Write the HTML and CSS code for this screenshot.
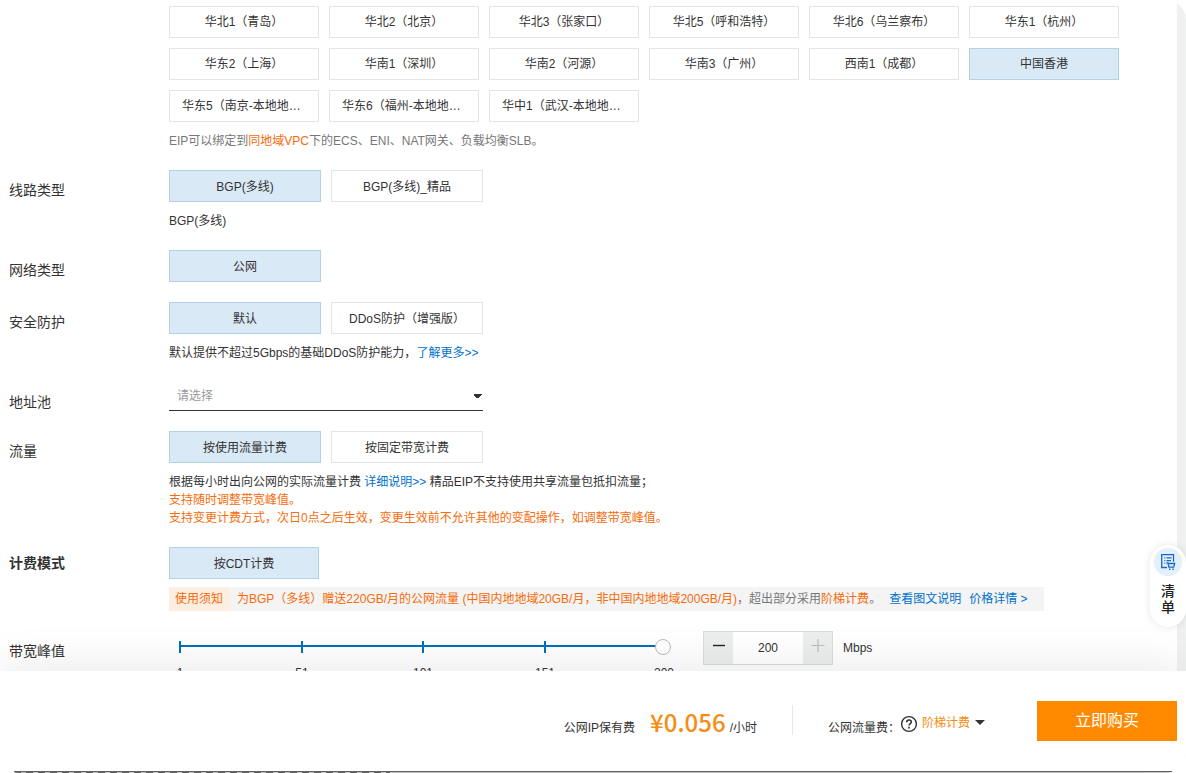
FILE: index.html
```html
<!DOCTYPE html>
<html lang="zh-CN">
<head>
<meta charset="utf-8">
<meta name="viewport" content="width=device-width, initial-scale=1">
<title>弹性公网IP</title>
<link rel="stylesheet" href="styles.css">
</head>
<body>
<div class="screen">
  <main class="form">
    <section class="row">
      <div class="row-label"></div>
      <div class="row-body">
        <div class="options">
          <button class="option option-region" type="button">华北1（青岛）</button>
          <button class="option option-region" type="button">华北2（北京）</button>
          <button class="option option-region" type="button">华北3（张家口）</button>
          <button class="option option-region" type="button">华北5（呼和浩特）</button>
          <button class="option option-region" type="button">华北6（乌兰察布）</button>
          <button class="option option-region" type="button">华东1（杭州）</button>
          <button class="option option-region" type="button">华东2（上海）</button>
          <button class="option option-region" type="button">华南1（深圳）</button>
          <button class="option option-region" type="button">华南2（河源）</button>
          <button class="option option-region" type="button">华南3（广州）</button>
          <button class="option option-region" type="button">西南1（成都）</button>
          <button class="option option-region selected" type="button">中国香港</button>
          <button class="option option-region" type="button">华东5（南京-本地地域）</button>
          <button class="option option-region" type="button">华东6（福州-本地地域）</button>
          <button class="option option-region" type="button">华中1（武汉-本地地域）</button>
        </div>
        <p class="hint muted">EIP可以绑定到<span class="warn">同地域VPC</span>下的ECS、ENI、NAT网关、负载均衡SLB。</p>
      </div>
    </section>

    <section class="row">
      <div class="row-label">线路类型</div>
      <div class="row-body">
        <div class="options">
          <button class="option selected" type="button">BGP(多线)</button>
          <button class="option" type="button">BGP(多线)_精品</button>
        </div>
        <p class="hint">BGP(多线)</p>
      </div>
    </section>

    <section class="row">
      <div class="row-label">网络类型</div>
      <div class="row-body">
        <div class="options">
          <button class="option selected" type="button">公网</button>
        </div>
      </div>
    </section>

    <section class="row">
      <div class="row-label">安全防护</div>
      <div class="row-body">
        <div class="options">
          <button class="option selected" type="button">默认</button>
          <button class="option" type="button">DDoS防护（增强版）</button>
        </div>
        <p class="hint">默认提供不超过5Gbps的基础DDoS防护能力，<a href="#">了解更多&gt;&gt;</a></p>
      </div>
    </section>

    <section class="row">
      <label class="row-label" for="pool">地址池</label>
      <div class="row-body">
        <select class="pool" id="pool"><option>请选择</option></select>
      </div>
    </section>

    <section class="row">
      <div class="row-label">流量</div>
      <div class="row-body">
        <div class="options">
          <button class="option selected" type="button">按使用流量计费</button>
          <button class="option" type="button">按固定带宽计费</button>
        </div>
        <p class="hint">根据每小时出向公网的实际流量计费 <a href="#">详细说明&gt;&gt;</a> 精品EIP不支持使用共享流量包抵扣流量；<br>
          <span class="warn">支持随时调整带宽峰值。<br>支持变更计费方式，次日0点之后生效，变更生效前不允许其他的变配操作，如调整带宽峰值。</span></p>
      </div>
    </section>

    <section class="row">
      <div class="row-label row-label-strong">计费模式</div>
      <div class="row-body">
        <div class="options">
          <button class="option option-mode selected" type="button">按CDT计费</button>
        </div>
        <div class="notice">
          <span class="notice-tag">使用须知</span>
          <span class="notice-text"><span class="warn">为BGP（多线）赠送220GB/月的公网流量 (中国内地地域20GB/月，非中国内地地域200GB/月)</span>，超出部分采用<span class="warn">阶梯计费</span>。</span>
          <a href="#">查看图文说明</a>
          <a href="#">价格详情 &gt;</a>
        </div>
      </div>
    </section>

    <section class="row">
      <label class="row-label" for="bandwidth">带宽峰值</label>
      <div class="row-body bandwidth">
        <div class="slider">
          <input class="slider-input" id="bandwidth" type="range" min="1" max="200" value="200">
          <div class="slider-scale"><span>1</span><span>51</span><span>101</span><span>151</span><span>200</span></div>
        </div>
        <div class="stepper">
          <button class="step" type="button" aria-label="减少"><svg width="14" height="14" viewBox="0 0 14 14"><path d="M1 6.5h12" stroke="#222" stroke-width="1.4"/></svg></button>
          <input class="step-value" type="text" value="200" aria-label="带宽值">
          <button class="step" type="button" aria-label="增加" disabled><svg width="14" height="14" viewBox="0 0 14 14"><path d="M.5 6.5h13M7 0v13" stroke="#bbb" stroke-width="1.2"/></svg></button>
        </div>
        <span class="unit">Mbps</span>
      </div>
    </section>
  </main>

  <footer class="checkout">
    <div class="fee">
      <span>公网IP保有费</span>
      <strong class="price">¥0.056</strong>
      <span>/小时</span>
    </div>
    <div class="divider"></div>
    <div class="traffic">
      <span class="traffic-label">公网流量费：</span>
      <svg class="help" width="18" height="18" viewBox="0 0 18 18" fill="none" stroke="#333" stroke-width="1.4"><circle cx="9" cy="9" r="7.4"/><path d="M6.7 7.3C6.7 5.8 7.7 5 9 5s2.4.8 2.4 2.1c0 1.5-2.3 1.7-2.3 3.4" stroke-width="1.6"/><path d="M9 11.8v1.6" stroke-width="1.7"/></svg>
      <button class="tier" type="button">阶梯计费<svg width="10" height="5" viewBox="0 0 10 5"><path d="M0 0h10L5 5z" fill="#333"/></svg></button>
    </div>
    <button class="buy" type="button">立即购买</button>
  </footer>
  <div class="edge"></div>

  <button class="cart" type="button">
    <span class="cart-icon"><svg width="16" height="18" viewBox="0 0 16 18" fill="none" stroke="#1769c2" stroke-width="1.3"><path d="M7 14.5H1.7V1.7h11.8v7"/><path d="M4.3 4.8h1M6.5 4.8h5M4.3 7.6h1M6.5 7.6h4.5M4.3 10.4h1"/><path d="M6.4 9.8h1.5l1 4.3h4.8l1-3.6H8.2"/><path d="M9 16.3h1.4M12.4 16.3h1.4" stroke-width="1.6"/></svg></span>
    <span class="cart-text">清单</span>
  </button>
</div>
</body>
</html>
```

FILE: styles.css
```css
* { box-sizing: border-box; }

body {
  margin: 0;
  background: #fff;
  color: #333;
  font: 12px/18px "Liberation Sans", "Noto Sans CJK SC", sans-serif;
}

button, input, select { font: inherit; color: inherit; margin: 0; }
button { cursor: pointer; }
a { color: #0070cc; text-decoration: none; }

.screen {
  position: relative;
  display: flex;
  flex-direction: column;
  height: 100vh;
  border-radius: 20px;
  overflow: hidden;
}

.form {
  flex: 1;
  min-height: 0;
  overflow: hidden;
  padding: 6px 0 0 9px;
  border-right: 9px solid #eff1f1;
}

.row { display: flex; margin-bottom: 20px; }
.row-label {
  flex: none;
  width: 160px;
  padding-top: 11px;
  font-size: 14px;
}
.row-label-strong { padding-top: 7px; font-weight: bold; }
.row-body { flex: 1; min-width: 0; }

.options { display: flex; flex-wrap: wrap; gap: 10px; }
.option {
  width: 152px;
  height: 32px;
  padding: 2px 12px 0;
  border: 1px solid #e3e4e6;
  background: #fff;
  text-align: center;
  white-space: nowrap;
  overflow: hidden;
  text-overflow: ellipsis;
}
.option-region { width: 150px; padding-top: 0; }
.option-mode { width: 150px; }
.selected { background: #d9e9f6; border-color: #b5d1e6; }

.hint { margin: 10px 0 0; }
.muted { color: #777; }
.warn { color: #f76b0a; }

.pool {
  display: block;
  width: 314px;
  height: 29px;
  padding: 0 8px;
  border: 0;
  border-bottom: 1px solid #333;
  border-radius: 0;
  appearance: none;
  color: #999;
  background:
    linear-gradient(to bottom right, #333 50%, transparent 50%) right 0 top 12px / 5px 5px no-repeat,
    linear-gradient(to bottom left, #333 50%, transparent 50%) right 5px top 12px / 5px 5px no-repeat,
    #fff;
}

.notice {
  display: flex;
  width: max-content;
  max-width: 100%;
  margin-top: 8px;
  padding-right: 16px;
  line-height: 24px;
  white-space: nowrap;
  background: #f4f4f4;
  color: #777;
}
.notice-tag { padding: 0 7px 0 6px; background: #fdeee2; color: #f76b0a; }
.notice-text { margin-left: 7px; }
.notice a { margin-left: 8px; }

.bandwidth { display: flex; align-items: flex-start; }
.slider { width: 502px; margin-right: 32px; }
.slider-input {
  display: block;
  width: 100%;
  height: 32px;
  padding: 0 0 0 3px;
  appearance: none;
  background:
    linear-gradient(#0070b8, #0070b8) 10px 14px / 484px 2px no-repeat,
    linear-gradient(#0070b8, #0070b8) 10px 10px / 2px 12px no-repeat,
    linear-gradient(#0070b8, #0070b8) 132px 10px / 2px 12px no-repeat,
    linear-gradient(#0070b8, #0070b8) 253px 10px / 2px 12px no-repeat,
    linear-gradient(#0070b8, #0070b8) 375px 10px / 2px 12px no-repeat;
}
.slider-input::-webkit-slider-thumb {
  appearance: none;
  width: 16px;
  height: 16px;
  border: 1px solid #bbb;
  border-radius: 50%;
  background: #fff;
}
.slider-scale {
  display: grid;
  grid-template-columns: 122px 121px 122px 119px 30px;
  margin: 1px 0 0 -4px;
}
.slider-scale span { width: 30px; text-align: center; }

.stepper {
  display: flex;
  width: 130px;
  height: 34px;
  border: 1px solid #d9dbdc;
}
.step {
  display: flex;
  justify-content: center;
  align-items: center;
  width: 29px;
  padding: 0 0 4px;
  border: 0;
  background: #eceeee;
}
.step-value {
  flex: 1;
  min-width: 0;
  padding: 0;
  border: 0;
  background: #fff;
  text-align: center;
}
.unit { margin-left: 10px; line-height: 34px; }

.checkout {
  position: relative;
  flex: none;
  display: flex;
  justify-content: flex-end;
  align-items: center;
  height: 100px;
  padding-right: 9px;
  background: #fff;
  box-shadow: 0 0 50px rgba(0, 0, 0, 0.1);
}
.fee {
  display: flex;
  align-items: baseline;
  padding: 8px 35px 0 0;
  line-height: 30px;
}
.divider { width: 1px; height: 30px; margin-bottom: 2px; background: #e8e8e8; }
.price {
  margin: 0 4px 0 15px;
  color: #f68c13;
  font-family: "Noto Sans CJK SC", sans-serif;
  font-size: 24px;
  font-weight: 500;
}
.traffic { display: flex; align-items: center; margin: 6px 52px 0 35px; }
.traffic-label { padding-top: 7px; }
.tier {
  display: flex;
  align-items: center;
  gap: 5px;
  padding: 0 0 3px 4px;
  border: 0;
  background: none;
  color: #f68c13;
}
.buy {
  width: 140px;
  height: 40px;
  padding: 0;
  border: 0;
  background: #ff8a00;
  color: #fff;
  font-size: 16px;
}

.edge {
  flex: none;
  height: 2px;
  margin: 0 14px;
  border-top: 1px solid #666;
  background: repeating-linear-gradient(90deg, #666 0 7px, #ccc 7px 12px) 0 0 / 376px 1px no-repeat #ccc;
}

.cart {
  position: absolute;
  right: 0;
  bottom: 146px;
  display: flex;
  flex-direction: column;
  align-items: center;
  gap: 7px;
  width: 36px;
  height: 82px;
  padding: 3px 0 0;
  border: 0;
  border-radius: 18px;
  background: #fff;
  box-shadow: 0 0 8px rgba(0, 0, 0, 0.1);
  color: #222;
}
.cart-icon {
  display: flex;
  justify-content: center;
  align-items: center;
  width: 28px;
  height: 28px;
  border-radius: 50%;
  background: #e3effc;
}
.cart-text { width: 14px; font-size: 14px; line-height: 16px; font-weight: 500; }
```
